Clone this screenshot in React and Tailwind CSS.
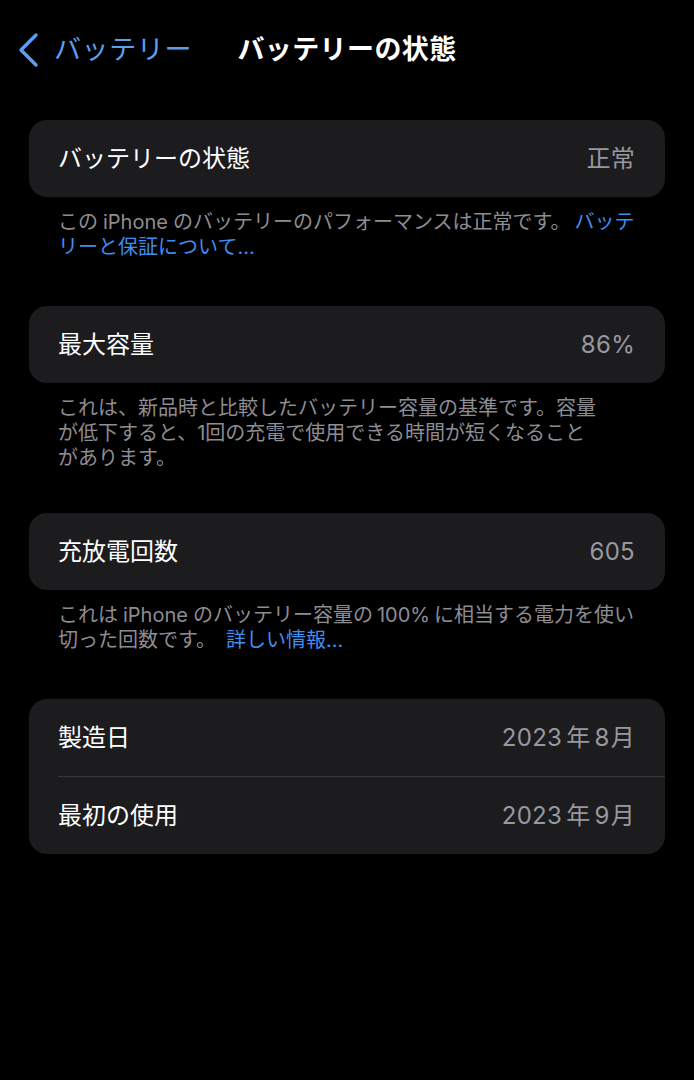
import React from "react";

const FONT = { fontFamily: '"Inter", "Noto Sans CJK JP", sans-serif' };

function Row({ label, value, divider }) {
  return (
    <div>
      <div className="flex h-[77px] items-center justify-between pl-[29px] pr-[30px]">
        <span className="text-[24px] text-white">{label}</span>
        <span className="text-[24px] tracking-[0.3px] text-[#98989f]">{value}</span>
      </div>
      {divider && <div className="ml-[29px] h-px bg-[#38383a]" />}
    </div>
  );
}

function Card({ children }) {
  return (
    <div className="mx-[29px] overflow-hidden rounded-[18px] bg-[#1c1c1e]">
      {children}
    </div>
  );
}

function Note({ children, className = "" }) {
  return (
    <p
      className={
        "mt-[13px] pl-[58px] pr-[30px] text-[20px] leading-[25px] whitespace-nowrap text-[#8d8d93] " +
        className
      }
    >
      {children}
    </p>
  );
}

function Date({ y, m }) {
  return (
    <span>
      {y}
      <span className="mx-[4px]">年</span>
      {m}
      <span className="ml-[1px]">月</span>
    </span>
  );
}

export default function App() {
  return (
    <div className="min-h-[1080px] w-full bg-black" style={FONT}>
      <header className="grid h-[100px] grid-cols-[1fr_auto_1fr] items-center">
        <button className="flex items-center gap-[14px] pl-[16px] text-[#5b9ff0]">
          <svg width="24" height="36" viewBox="0 0 24 36" fill="none">
            <polyline
              points="20,3 5,18 20,33"
              stroke="currentColor"
              strokeWidth="3.4"
              strokeLinecap="round"
              strokeLinejoin="round"
            />
          </svg>
          <span className="text-[27px] tracking-[0.6px]">バッテリー</span>
        </button>
        <h1 className="text-[27px] font-bold tracking-[0.4px] text-white">バッテリーの状態</h1>
        <div />
      </header>

      <main className="mt-[20px]">
        <section>
          <Card>
            <Row label="バッテリーの状態" value="正常" />
          </Card>
          <Note>
            この<span className="mx-[5px]">iPhone</span>のバッテリーのパフォーマンスは正常です。
            <span className="ml-[4px] text-[#3f8ef0]">
              バッテ
              <br />
              リーと保証について...
            </span>
          </Note>
        </section>

        <section className="mt-[46px]">
          <Card>
            <Row label="最大容量" value="86%" />
          </Card>
          <Note className="leading-[24px]">
            これは、新品時と比較したバッテリー容量の基準です。容量
            <br />
            が低下すると、1回の充電で使用できる時間が短くなること
            <br />
            があります。
          </Note>
        </section>

        <section className="mt-[42px]">
          <Card>
            <Row label="充放電回数" value="605" />
          </Card>
          <Note>
            これは<span className="mx-[5px]">iPhone</span>のバッテリー容量の
            <span className="mx-[4px]">100%</span>に相当する電力を使い
            <br />
            切った回数です。
            <span className="ml-[10px] text-[#3f8ef0]">詳しい情報...</span>
          </Note>
        </section>

        <section className="mt-[46px]">
          <Card>
            <Row label="製造日" value={<Date y="2023" m="8" />} divider />
            <Row label="最初の使用" value={<Date y="2023" m="9" />} />
          </Card>
        </section>
      </main>
    </div>
  );
}
